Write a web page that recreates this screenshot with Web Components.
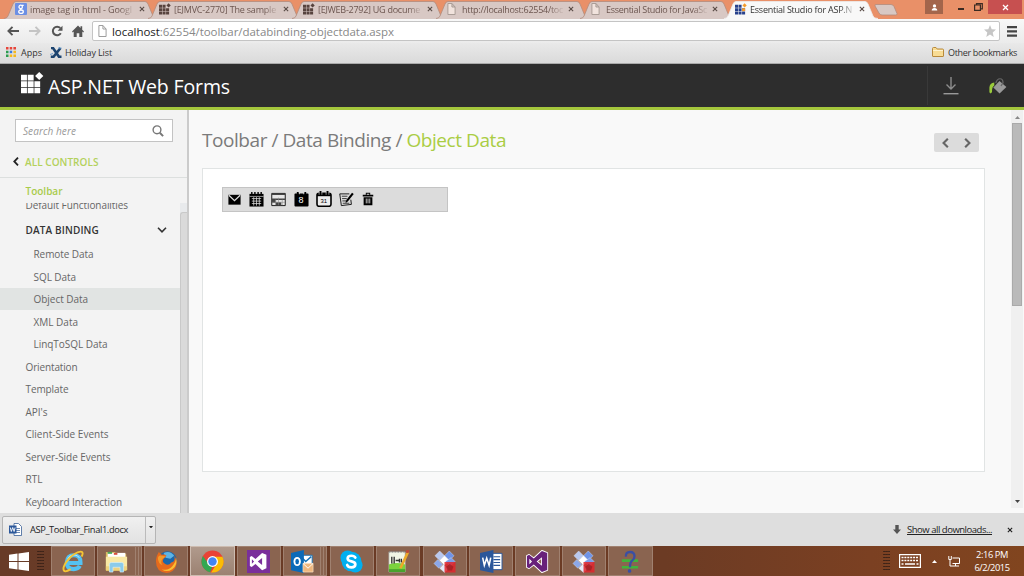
<!DOCTYPE html>
<html lang="en"><head><meta charset="utf-8"><title>Essential Studio for ASP.NET</title>
<style>body{margin:0;width:1024px;height:576px;overflow:hidden;background:#fff;font-family:"Open Sans","Noto Sans",sans-serif}</style></head>
<body><desktop-screen></desktop-screen>
<script>
const define=(n,c)=>customElements.define(n,c);
class Base extends HTMLElement{
  connectedCallback(){ if(!this.shadowRoot){this.attachShadow({mode:'open'}).innerHTML=this.view();} this.ready&&this.ready(); }
}
const calGrid='<path d="M3 7h10M3 9.7h10M3 12.3h10M5 5.5v9M8 5.5v9M11 5.5v9" stroke="#ddd" stroke-width=".8"/>';
const vs=(c)=>`<path fill="${c}" fill-rule="evenodd" d="M17 0l6 2.5v19L17 24 7.800 15.500 2.500 19.500 0 18.300V5.700L2.500 4.500l5.300 4L17 0zM17 7.200L11 12l6 4.800zM2.800 9v6l3-3z"/>`;
const cubes='<g stroke="#e8eefc" stroke-width=".4"><path fill="#b9c8ee" d="M7 1l5 5-5 5-5-5z"/><path fill="#6f93e6" d="M17 1l5 5-5 5-5-5z"/><path fill="#fff" d="M12 6l5 5-5 5-5-5z"/><path fill="#7d9ce8" d="M19 8l4 4-5 5-5-5z"/><path fill="#8ba7ea" d="M5 10l5 5-4 4-5-5z"/><path fill="#e4ebfa" d="M11 15l5 5-4 3.500-5-4.500z"/></g><path fill="#e0242c" opacity=".85" d="M12 12.500h11.500v11H12z"/><path fill="#8d1a20" opacity=".6" d="M17.500 14.500l3.800 3-1.500 4h-4.600l-1.500-4z"/>';
const grid=(c,d)=>`<path fill="${c}" d="M0 3h4.800v5H0zM5.600 3h4.800v5H5.600zM0 8.800h4.800v4.800H0zM5.600 8.800h4.800v4.800H5.600zM11.200 8.800H16v4.800h-4.800zM0 14.400h4.800v4.800H0zM5.600 14.400h4.800v4.800H5.600zM11.200 14.400H16v4.800h-4.800z"/><path fill="${d}" d="M15.200.6l3.400 3.400-3.400 3.400L11.800 4z"/>`;
const ICONS={
 google:['0 0 12 12','<rect width="12" height="12" rx="1" fill="#6c8fe4"/><g fill="none" stroke="#fff" stroke-width="1.300"><circle cx="5.700" cy="3.900" r="1.700"/><ellipse cx="6" cy="8.700" rx="2.300" ry="1.700"/><path d="M5.700 5.600q-1.300.7.800 1.400M7 2.300h1.700"/></g>'],
 logoTab:['0 0 19 20',grid('#57433e','#57433e')],
 logoColor:['0 0 19 20',grid('#27418c','#f39a2b')+'<path fill="#f39a2b" d="M11.200 8.800H16v4.800h-4.800z"/>'],
 logoWhite:['0 0 24 23','<path fill="#fff" d="M0 3h6.200v6H0zM7 3h6.200v6H7zM0 9.700h6.200v6H0zM7 9.700h6.200v6H7zM14 9.700h6v6h-6zM0 16.500h6.200v5.700H0zM7 16.500h6.200v5.700H7zM14 16.500h6v5.700h-6zM19 0l4.300 4.200L19 8.400l-4.300-4.200z"/>'],
 page:['0 0 10 12','<path fill="#f1e3dd" stroke="#a79a94" d="M1 .5h4.500L9 4v7.500H1zM5.500.5V4H9"/>'],
 pageW:['0 0 10 12','<path fill="#fff" stroke="#999" d="M1 .5h4.500L9 4v7.500H1zM5.500.5V4H9"/>'],
 close:['0 0 7 7','<path stroke="currentColor" stroke-width="1.300" d="M1 1l5 5M6 1L1 6"/>'],
 back:['0 0 12 10','<path fill="none" stroke="currentColor" stroke-width="1.900" d="M12 5H1.500M5.500.8L1.400 5l4.100 4.200"/>'],
 fwd:['0 0 12 10','<path fill="none" stroke="currentColor" stroke-width="1.900" d="M0 5h10.500M6.500.8L10.600 5 6.500 9.200"/>'],
 reload:['0 0 12 12','<path fill="none" stroke="#555" stroke-width="2" d="M9.800 8.200A4.300 4.300 0 1 1 9.300 3"/><path fill="#555" d="M11.500.8v4.900H6.600z"/>'],
 home:['0 0 12 12','<path fill="#555" d="M6 .5l2.500 2.500V1.300h1.700v3.400L12 6.600l-.8.8-.9-.8V12H7.300V8.300H4.700V12H1.700V6.600l-.9.8-.8-.8z"/>'],
 star:['0 0 12 12','<path fill="#c6c6c6" d="M6 0l1.700 4.200 4.300.3-3.300 2.900 1 4.600L6 9.500 2.300 12l1-4.600L0 4.500l4.300-.3z"/>'],
 menu:['0 0 10 11','<path fill="#444" d="M0 0h10v2.200H0zM0 4.300h10v2.200H0zM0 8.600h10v2.200H0z"/>'],
 apps:['0 0 10 10','<path fill="#e6453a" d="M0 0h2.500v2.500H0zM3.700 0h2.500v2.500H3.700zM7.400 0H10v2.500H7.400z"/><path fill="#2c9c4f" d="M0 3.700h2.500v2.500H0zM0 7.400h2.500V10H0z"/><path fill="#3a7de0" d="M3.700 3.700h2.500v2.500H3.700z"/><path fill="#f5b81d" d="M7.400 3.700H10v2.500H7.400zM3.700 7.400h2.500V10H3.700zM7.400 7.400H10V10H7.400z"/>'],
 holiday:['0 0 12 11','<path fill="none" stroke="#1c4470" stroke-width="2.600" d="M1 1h2l6 8.800h2.500M10.500 1L3.500 9.800H.8"/><path stroke="#6fa0d0" d="M8 1h3.500M0 7.500l3-1"/>'],
 folder:['0 0 12 10','<path fill="#f8dc94" stroke="#b88a3c" d="M.5 9V1.500q0-1 1-1H4l1.200 1.500h5.300q1 0 1 1V9q0 .5-.5.5H1Q.5 9.500.5 9z"/><path stroke="#fff3cf" d="M1 3.500h10"/>'],
 person:['0 0 8 8','<circle cx="4" cy="2.200" r="1.900" fill="#fff"/><path fill="#fff" d="M.8 7.500q0-3 3.200-3t3.200 3z"/>'],
 restore:['0 0 9 8','<path fill="none" stroke="#3b2a22" stroke-width="1.200" d="M.6 2h5.800v5.300H.6zM2.500 1.800V.6h5.800v5.200H6.500"/>'],
 download:['0 0 16 18','<path fill="none" stroke="#8d8d8d" stroke-width="1.400" d="M8 0v12M3.500 7.600L8 12l4.500-4.400"/><path stroke="#999" stroke-width="1.400" d="M.5 16.700h15"/>'],
 bucket:['0 0 18 18','<path fill="#999" d="M10.500 3.300l6.900 6.200-6.800 7L4.300 10z"/><path fill="none" stroke="#666" stroke-width="1.300" d="M6.800 5.500Q8 .8 11 .8T14 5l-2 3.500"/><path fill="#9acb3c" d="M5.300 4.800Q.7 5.300.4 10v5l1 1.500L3 15q-.2-5.500 2.300-7z"/>'],
 search:['0 0 12 12','<circle cx="5" cy="4.800" r="3.900" fill="none" stroke="#777" stroke-width="1.400"/><path stroke="#777" stroke-width="2" d="M7.800 7.700l3.300 3.400"/>'],
 left:['0 0 6 9','<path fill="none" stroke="currentColor" stroke-width="1.800" d="M5 .7L1.300 4.500 5 8.300"/>'],
 right:['0 0 6 9','<path fill="none" stroke="currentColor" stroke-width="1.800" d="M1 .7l3.700 3.800L1 8.300"/>'],
 down:['0 0 10 6','<path fill="none" stroke="#333" stroke-width="1.600" d="M1 .8l4 4 4-4"/>'],
 mail:['0 0 16 16','<path d="M1.500 3h13v10.500h-13z"/><path fill="none" stroke="#ddd" stroke-width="1.300" d="M2 3.500l6 5.700 6-5.700"/>'],
 cal1:['0 0 16 16','<path d="M.5 2h15v13.500H.5z"/><path stroke="#ddd" stroke-width=".7" d="M.5 4.700h15"/><path stroke="#000" stroke-width="1.500" d="M3 0v3M6.300 0v3M9.700 0v3M13 0v3"/>'+calGrid],
 sched:['0 0 16 16','<path fill="#e6e6e6" stroke="#111" stroke-width="1" d="M.8 1.500h14.400v13H.8z"/><path fill="#444" d="M1 1.500h14v1.600H1zM1 7h14v1.500H1zM1 8h4v3.500H1zM5 11h6v3.500H5z"/><path stroke="#888" stroke-width=".6" d="M1 11h14M5 8v6M8 6v8M12 8v6"/>'],
 cal8:['0 0 16 16','<path d="M.5 2.500q0-.8.8-.8H3V0h2v1.700h6V0h2v1.700h1.700q.8 0 .8.800v12q0 1-1 1h-13q-1 0-1-1z"/><path fill="#ddd" d="M5.300 0h.8v2.500h-.8zM10 0h.8v2.500H10z"/>'],
 cal31:['0 0 16 16','<rect x="1" y="2.300" width="14" height="13" rx="2" fill="#eee" stroke="#000" stroke-width="1.600"/><path d="M1 2h14v3.200H1z"/><path stroke="#000" stroke-width="2" d="M4.500 0v4M11.500 0v4"/><path stroke="#ddd" stroke-width=".6" d="M3.100.8v3M5.900.8v3M10.100.8v3M12.900.8v3"/>'],
 edit:['0 0 16 16','<path fill="none" stroke="#111" d="M11 2H.8l1.700 12.500 10.700-1.300-.6-5"/><path stroke="#333" d="M3 4.500h6M3.300 7h5M3.600 9.500h4M4 12h7"/><path stroke="#000" stroke-width="2.300" d="M14.800 1.500L8.500 9.500"/><path d="M7 11.700l.5-3.200 2 1.600z"/>'],
 trash:['0 0 16 16','<path d="M2 3h12v2H2zM5.500.8h5V3H9.500V1.900h-3V3h-1zM3 6h10v9H3z"/><path stroke="#ddd" stroke-width="1" d="M6 7.500v5.500M8 7.500v5.500M10 7.500v5.500"/>'],
 docx:['0 0 13 13','<path fill="#fff" stroke="#3a5f97" stroke-width=".8" d="M5 .5h4.500l3 3v9H5z"/><path stroke="#6f8cb5" d="M7 5.500h4M7 7.500h4M7 9.500h4"/><path fill="#2b579a" d="M0 2.500h7.500v8H0z"/><path fill="none" stroke="#fff" stroke-width=".9" d="M1.300 4.500l1 4 1.400-4 1.400 4 1-4"/>'],
 dlarrow:['0 0 8 9','<path fill="#555" d="M2.300 0h3.400v4.500H8L4 9 0 4.500h2.300z"/>'],
 win:['0 0 20 19','<path fill="#fff" d="M0 2.800L8.500 1.600v7.500H0zM9.500 1.400L20 0v9.100H9.500zM0 10h8.500v7.500L0 16.300zM9.500 10H20v9l-10.500-1.400z"/>'],
 ie:['0 0 24 24','<path fill="none" stroke="#54c2f2" stroke-width="4.300" d="M5 13.500h14.300Q19.500 5.500 12.500 5.500T5 13q0 7 7.300 7 4.500 0 6.300-3.400"/><path fill="none" stroke="#c6edff" stroke-width="1" d="M6 9q2-3.800 6.500-3.900 4 0 5.500 3"/><path fill="none" stroke="#f5c534" stroke-width="2" d="M20.500 7q2.500-5.500-1-5.300Q13 2.300 6.500 10T2 21.500q1.500 2 7-1.500"/>'],
 explorer:['0 0 26 24','<path fill="#d9b75e" d="M1 2h10l2 2h11v18H1z"/><path fill="#fff" d="M3 3h20v6H3z"/><path fill="#4aa85b" d="M3 2h5v2H3z"/><path fill="#d84c3c" d="M10 3h4v2h-4z"/><path fill="#f9e8a4" d="M1 7h24v14H1z"/><path fill="#efd27c" d="M1 17h24v4H1z"/><path fill="#8bcbe9" stroke="#d7f0fb" stroke-width=".7" d="M5 15q0-2 2-2h12q2 0 2 2v8h-4v-5H9v5H5z"/>'],
 firefox:['0 0 24 24','<circle cx="13" cy="11" r="9.700" fill="#1b67aa"/><path fill="#5db4e5" d="M9 3q7-3 11 3l-4 3-5-1z"/><path fill="#e66a1c" d="M2 6l2-4 3 3q3-1 5 1l-3 3q-2 3 1 5 4 3 7-1 5-1 3-7 4 5 2 11-3 7-10 7Q1 23 1 12q0-3 1-6z"/><path fill="#f9bf33" d="M22 8q2 8-4 12t-11 0q7 2 11-3t4-9z"/><path fill="#f39a2a" d="M3 8q1-3 4-2 2 0 4 1L8 9q-3 4 0 7-5-2-5-8z"/>'],
 chrome:['0 0 24 24','<circle cx="12" cy="12" r="11.500" fill="#e94235"/><path fill="#33a852" d="M2 6.200l6 8.500 4 2.500-2.500 6A11.500 11.500 0 0 1 2 6.200z"/><path fill="#fbbc05" d="M12 7h10.400A11.500 11.500 0 0 1 10.500 23.400L16 15z"/><circle cx="12" cy="12" r="5.700" fill="#fff"/><circle cx="12" cy="12" r="4.400" fill="#4285f4"/>'],
 vs13:['0 0 24 24','<path fill="#7a2f9b" d="M0 0h24v24H0z"/><g transform="translate(3 3) scale(.75)">'+vs('#fff')+'</g>'],
 vs:['-1 -1 26 26','<g stroke="#fff" stroke-width="2" stroke-linejoin="round">'+vs('#fff')+'</g>'+vs('#68217a')],
 outlook:['0 0 25 24','<path fill="#fff" stroke="#1673b9" d="M10 5.500h13V17H10z"/><path fill="none" stroke="#1673b9" stroke-width="1.600" d="M11 7l5 5 6-5"/><path fill="#0b6ab8" d="M0 3l14-3v24L0 21z"/><ellipse cx="6.700" cy="12" rx="3" ry="3.800" fill="none" stroke="#fff" stroke-width="2"/><path fill="#efb77e" stroke="#fae1c4" stroke-width=".7" d="M13 14h11v9H13z"/><path fill="none" stroke="#fff" d="M13 14l5.500 5 5.500-5"/>'],
 skype:['0 0 24 24','<circle cx="8" cy="8" r="7.500" fill="#00aff0"/><circle cx="16" cy="16" r="7.500" fill="#00aff0"/><circle cx="12" cy="12" r="10.300" fill="#00aff0"/><path fill="none" stroke="#fff" stroke-width="2.800" stroke-linecap="round" d="M16 8q-1-2-4-2-4 0-4 2.900 0 2.200 4 3t4 3q0 3.200-4 3.200-3.500 0-4.500-2.500"/>'],
 notepad:['0 0 24 24','<path fill="#f2f6e4" stroke="#aaa" stroke-width=".7" d="M2 2h17v21H2z"/><path fill="#7bd33d" d="M2 15q8-3 17 0v8H2z"/><path fill="#47a32d" d="M2 20h17v3H2z"/><path stroke="#333" stroke-width="1.400" d="M5 7v7M7.500 7v7M9 11h4M13 9v4M15 9v4"/><path stroke="#777" d="M2 2h17" stroke-dasharray="1.500"/><path stroke="#eca92a" stroke-width="2.700" d="M22 2l-8 17"/><path stroke="#bd4a38" stroke-width="3" d="M22 0l-1 3"/>'],
 cubes:['0 0 24 24',cubes],
 word:['0 0 24 24','<path fill="#fff" stroke="#2b579a" d="M12 3.500h11v17H12z"/><path stroke="#2b579a" stroke-width="1.200" d="M14 7h7M14 10h7M14 13h7M14 16h7"/><path fill="#2b579a" d="M0 3l14-3v24L0 21z"/><path fill="none" stroke="#fff" stroke-width="1.600" d="M2.800 8l1.700 8L7 8.500 9.500 16l1.700-8"/>'],
 query:['0 0 20 24','<path stroke="#41b33c" stroke-width="2.800" d="M1 11h18M1 18h18"/><path fill="none" stroke="#3a4fa3" stroke-width="2.600" d="M5.500 7q-.5-5 4.500-5t5 4.500q0 3-2.500 4.500T10 18"/><circle cx="9.500" cy="21.800" r="2" fill="#3a4fa3"/>'],
 keyboard:['0 0 22 14','<path fill="none" stroke="#fff" stroke-width="1.200" d="M.6.6h20.800v12.800H.6z"/><path stroke="#fff" stroke-width="1.700" stroke-dasharray="2 .9" d="M2.500 3.500h17M2.500 6.500h17"/><path stroke="#fff" stroke-width="1.700" d="M2.500 10h2M6 10h10M17.500 10h2"/>'],
 net:['0 0 12 12','<path fill="none" stroke="#fff" d="M4.500 3h7v5.500h-7M7.500 8.500V11M5 11h6M2 5v6h3M.8 1v3.500h2.500V1"/>'],
 tri:['0 0 8 5','<path fill="currentColor" d="M4 0l4 5H0z"/>'],
 trid:['0 0 8 5','<path fill="currentColor" d="M0 0h8L4 5z"/>']
};
define('ui-icon',class extends Base{view(){const [vb,b]=ICONS[this.getAttribute('name')],w=this.getAttribute('w'),h=this.getAttribute('h')||w;
 return `<style>:host{display:block;flex:none;width:${w}px;height:${h}px}svg{display:block}</style><svg width="${w}" height="${h}" viewBox="${vb}" preserveAspectRatio="none">${b}</svg>`}});
/* One-line label whose tracking is adjusted so that it spans a given width. */
define('ui-label',class extends Base{view(){return `<style>:host{display:block;flex:none;white-space:nowrap;line-height:1.300;font-size:${this.getAttribute('size')||10}px}span{display:inline-block;padding-top:1.600px}:host([underline]) span{text-decoration:underline}</style><span><slot></slot></span>`}
 ready(){const s=this.shadowRoot.querySelector('span'),w=+this.getAttribute('w');if(!w)return;const n=s.getBoundingClientRect().width;s.style.letterSpacing=((w-n)/this.textContent.length)+'px';this.style.width=w+'px'}});
define('browser-tab',class extends Base{view(){const a=this.hasAttribute('active');return `<style>:host{display:block;position:relative;width:144px;height:19px;flex:none;z-index:${a?3:1};color:${a?'#333':'#6c5650'}}
 .s{position:absolute;left:0;top:1px}.c{position:relative;display:flex;align-items:center;height:18px;padding-left:11px;gap:3px}.t{width:104px;-webkit-mask:linear-gradient(90deg,#000 86%,rgba(0,0,0,.15) 99%)}ui-icon[name=close]{margin-left:2px;color:#5b4d48}ui-icon[name=page]{margin-right:3px}ui-icon[name=page]+.t{width:101px}</style>
 <svg class="s" width="155" height="18"><path d="M0 17.500Q3 17.500 4 15L9 3Q10 .5 12 .5H141Q143 .5 144 3L149 15Q150 17.500 154 17.500V18H0z" fill="${a?'#f8f8f8':'#d8c8c4'}"/><path d="M0 17.500Q3 17.500 4 15L9 3Q10 .5 12 .5H141Q143 .5 144 3L149 15Q150 17.500 154 17.500" fill="none" stroke="${a?'#eee':'#b28b7c'}" stroke-width=".8"/></svg>
 <div class="c"><ui-icon name="${this.getAttribute('icon')}" w="${this.getAttribute('icon')=='page'?9:12}" h="12"></ui-icon><div class="t"><ui-label size="9" w="${this.getAttribute('w')}">${this.textContent}</ui-label></div><ui-icon name="close" w="6"></ui-icon></div>`}});
define('browser-chrome',class extends Base{view(){return `<style>:host{display:flex;flex-direction:column;height:64px;background:#e6e6e6;flex:none}
 .tabs{height:18.500px;background:#e99068;display:flex;padding-left:4px;flex:none}.new{margin:4px 0 0 6px;width:25px;height:12px;flex:none}.win{display:flex;margin-left:auto;height:14px;align-items:center;padding-right:2px}
 .u{width:18px;height:14px;background:#a3654b;display:grid;place-items:center;margin-right:15px}.m{width:6px;height:2px;background:#3b2a22;margin:4px 10px 0 0}.x{width:34px;height:14px;background:#c75050;display:grid;place-items:center;color:#fff;margin-left:5px}
 .nav{height:24.500px;background:linear-gradient(#f8f8f8,#ebebeb);display:flex;align-items:center;padding:1px 7px 0 7px;box-sizing:border-box;color:#555;flex:none}
 .url{flex:1;display:flex;align-items:center;height:18px;background:#fff;border:1px solid #c4c4c4;border-radius:2px;margin:0 7px 0 8px;padding:0 3px 0 5px;gap:5px;color:#888}.url b{font-weight:400;color:#222}.url ui-icon[name=star]{margin-left:auto}
 .bm{flex:1;background:linear-gradient(#e9e9e9,#dadada);display:flex;align-items:center;padding:0 7px 2px 6px;color:#333;border-bottom:1px solid #aaa}.o{display:flex;gap:4px;margin-left:auto;align-items:center}</style>
 <div class="tabs"><browser-tab icon="google" w="102">image tag in html - Googl</browser-tab><browser-tab icon="logoTab" w="102">[EJMVC-2770] The sample</browser-tab><browser-tab icon="logoTab" w="102">[EJWEB-2792] UG docume</browser-tab><browser-tab icon="page" w="101">http://localhost:62554/toc</browser-tab><browser-tab icon="page" w="101">Essential Studio for JavaSc</browser-tab><browser-tab active icon="logoColor" w="102">Essential Studio for ASP.N</browser-tab>
 <svg class="new" viewBox="0 0 25 12"><path d="M2 .5h15q2 0 3 2l3 7q.5 1.500-1.500 1.500H8q-2 0-3-2L1 2Q.5.5 2 .5z" fill="#d8c8c4" stroke="#b28b7c" stroke-width=".8"/></svg>
 <div class="win"><div class="u"><ui-icon name="person" w="7"></ui-icon></div><div class="m"></div><ui-icon name="restore" w="9" h="8"></ui-icon><div class="x"><ui-icon name="close" w="7"></ui-icon></div></div></div>
 <div class="nav"><ui-icon name="back" w="12" h="10"></ui-icon><ui-icon name="fwd" w="12" h="10" style="margin-left:10px;color:#c4c4c4"></ui-icon><ui-icon name="reload" w="12" style="margin-left:10px"></ui-icon><ui-icon name="home" w="12" style="margin-left:9px"></ui-icon>
 <div class="url"><ui-icon name="pageW" w="9" h="12"></ui-icon><ui-label size="11.500" w="282" style="margin-top:1px"><b>localhost</b>:62554/toolbar/databinding-objectdata.aspx</ui-label><ui-icon name="star" w="12"></ui-icon></div><ui-icon name="menu" w="10" h="11"></ui-icon></div>
 <div class="bm"><ui-icon name="apps" w="10"></ui-icon><ui-label size="9" w="21" style="margin-left:5px">Apps</ui-label><ui-icon name="holiday" w="12" h="11" style="margin-left:8px"></ui-icon><ui-label size="9" w="47" style="margin-left:3px">Holiday List</ui-label><div class="o"><ui-icon name="folder" w="12" h="10"></ui-icon><ui-label size="9" w="69">Other bookmarks</ui-label></div></div>`}});
define('site-header',class extends Base{view(){return `<style>:host{display:flex;flex:none;height:43px;background:#2d2d2d;border-bottom:3px solid #a4c63c;color:#fff;align-items:center;padding-left:21px}
 .i{margin-left:auto;display:flex;height:38px;border-left:1px solid #393939;align-items:center;padding:1px 17px 0 15px;gap:30px}</style><ui-icon name="logoWhite" w="23" h="22" style="margin-top:-5px"></ui-icon><ui-label size="19.500" w="182" style="margin:1px 0 0 4px">ASP.NET Web Forms</ui-label><div class="i"><ui-icon name="download" w="16" h="18"></ui-icon><ui-icon name="bucket" w="18" h="17"></ui-icon></div>`}});
define('nav-row',class extends Base{view(){return `<style>:host{display:flex;align-items:center;height:22.500px;padding-left:${this.hasAttribute('sub')?33.5:25.5}px;color:#666;box-sizing:border-box}:host([on]){background:#e1e4e3}:host([head]){height:26.700px;font-weight:600;color:#333;padding-right:13px;justify-content:space-between}</style><ui-label size="10" w="${this.getAttribute('w')}">${this.textContent}</ui-label>${this.hasAttribute('head')?'<ui-icon name="down" w="10" h="6"></ui-icon>':''}`}});
define('side-nav',class extends Base{view(){return `<style>:host{display:flex;flex-direction:column;width:186.500px;background:#f3f3f3;border-right:2px solid #cbcbcb;box-sizing:content-box;overflow:hidden;flex:none}
 .s{margin:9px 14px 0 15px;height:21px;border:1px solid #c3c3c3;background:#fff;display:flex;align-items:center;justify-content:space-between;padding:0 8px 0 7px;color:#999;font-style:italic;flex:none}
 .a{height:36px;border-bottom:1px solid #dcdfde;display:flex;align-items:center;padding:4px 0 0 13px;gap:6px;color:#b3d15c;font-weight:600;flex:none;box-sizing:border-box}.t{height:25px;box-sizing:border-box;padding:5px 0 0 25.500px;color:#a9cb4c;font-weight:600;flex:none}
 .v{flex:1;display:flex;overflow:hidden}.l{width:180px;margin-top:-9.300px}.b{flex:1;background:#e8eaec;display:flex;padding-top:9px}.b i{flex:1;background:#dadada;border:1px solid #c9c9c9;border-right:0;border-bottom:0;border-radius:3px 0 0 0}</style>
 <div class="s"><ui-label size="10" w="53">Search here</ui-label><ui-icon name="search" w="12"></ui-icon></div><div class="a"><ui-icon name="left" w="6" h="9" style="color:#222"></ui-icon><ui-label size="10" w="73.500">ALL CONTROLS</ui-label></div><div class="t"><ui-label size="10" w="37">Toolbar</ui-label></div>
 <div class="v"><div class="l"><nav-row w="102.500">Default Functionalities</nav-row><nav-row head w="73.500">DATA BINDING</nav-row><nav-row sub w="60">Remote Data</nav-row><nav-row sub w="42.500">SQL Data</nav-row><nav-row sub on w="54.500">Object Data</nav-row><nav-row sub w="44.500">XML Data</nav-row><nav-row sub w="74">LinqToSQL Data</nav-row><nav-row w="52">Orientation</nav-row><nav-row w="43">Template</nav-row><nav-row w="22">API's</nav-row><nav-row w="83">Client-Side Events</nav-row><nav-row w="85">Server-Side Events</nav-row><nav-row w="17">RTL</nav-row><nav-row w="96.500">Keyboard Interaction</nav-row></div><div class="b"><i></i></div></div>`}});
define('tool-strip',class extends Base{view(){return `<style>:host{display:flex;align-items:center;box-sizing:border-box;width:226px;height:24.500px;background:#dcdcdc;border:1px solid #c4c4c4;padding-left:3.700px;gap:7.300px}div{display:grid}div>*{grid-area:1/1;place-self:center}ui-label{font-family:"Liberation Sans",sans-serif}</style>
 <ui-icon name="mail" w="15"></ui-icon><ui-icon name="cal1" w="15"></ui-icon><ui-icon name="sched" w="15"></ui-icon><div><ui-icon name="cal8" w="15"></ui-icon><ui-label size="9" style="color:#fff;padding-top:1px">8</ui-label></div><div><ui-icon name="cal31" w="16"></ui-icon><ui-label size="6" style="padding-top:3px">31</ui-label></div><ui-icon name="edit" w="15"></ui-icon><ui-icon name="trash" w="14"></ui-icon>`}});
define('content-area',class extends Base{view(){return `<style>:host{flex:1;display:flex;background:#f9f9f9}.m{flex:1;padding:0 26.500px 0 13.500px}.h{height:58px;display:flex;justify-content:space-between;box-sizing:border-box;color:#7b7b7b}.h em{font-style:normal;color:#aacd44}
 .n{display:flex;justify-content:space-between;align-items:center;box-sizing:border-box;width:45px;height:19px;margin:23px 5.500px 0 0;background:#dcdcdc;border-radius:2px;padding:0 8px;color:#666}.p{height:304px;box-sizing:border-box;background:#fff;border:1px solid #e1e4e4;padding:18px 19px}
 .s{width:12px;height:398px;background:#f0f0f0;display:flex;flex-direction:column;align-items:center;color:#888;margin-right:1px}.s i{width:10px;height:183px;background:#bababa;border:1px solid #aaa;box-sizing:border-box;margin:4px 0 auto}</style>
 <div class="m"><div class="h"><ui-label size="19" w="304" style="margin-top:16px">Toolbar / Data Binding / <em>Object Data</em></ui-label><div class="n"><ui-icon name="left" w="7" h="10"></ui-icon><ui-icon name="right" w="7" h="10"></ui-icon></div></div><div class="p"><tool-strip></tool-strip></div></div>
 <div class="s"><ui-icon name="tri" w="5" h="3" style="margin-top:6px"></ui-icon><i></i><ui-icon name="trid" w="5" h="3" style="color:#444;margin-bottom:5px"></ui-icon></div>`}});
define('download-bar',class extends Base{view(){return `<style>:host{display:flex;flex:none;height:33px;background:#dedede;align-items:center;padding:0 11px 0 2px;color:#222}.f{display:flex;align-items:center;width:154px;height:28px;border:1px solid #b5b5b5;border-radius:2px;background:linear-gradient(#f0f0f0,#e2e2e2);box-sizing:border-box;padding-left:6px}.d{width:10px;height:100%;border-left:1px solid #bbb;margin-left:auto;display:flex;justify-content:center;padding-top:9px;box-sizing:border-box}.r{margin-left:auto;display:flex;align-items:center}</style>
 <div class="f"><ui-icon name="docx" w="13"></ui-icon><ui-label size="9.300" w="98" style="margin-left:8px">ASP_Toolbar_Final1.docx</ui-label><div class="d"><ui-icon name="trid" w="4" h="2.500"></ui-icon></div></div><div class="r"><ui-icon name="dlarrow" w="8" h="9"></ui-icon><ui-label underline size="9.500" w="85" style="margin:0 15px 0 6px">Show all downloads...</ui-label><ui-icon name="close" w="6"></ui-icon></div>`}});
define('task-button',class extends Base{view(){const k=this.hasAttribute('stack');return `<style>:host{display:flex;flex:none;width:44.300px;height:30px}div{box-sizing:border-box;height:30px;border:1px solid #a08170;background:#8a6450;display:grid;place-items:center}.m{flex:1}.k{width:3px;border-left:0}:host([on]) .m{background:linear-gradient(#b09a8c,#9c8272);border-color:#cdbcb0}</style><div class="m"><ui-icon name="${this.getAttribute('icon')}" w="${this.getAttribute('w')||23}" h="${this.getAttribute('h')||23}"></ui-icon></div>${k?'<div class="k"></div><div class="k"></div>':''}`}});
define('task-bar',class extends Base{view(){const b=['ie','explorer*','firefox','chrome!','vs13','outlook*','skype','notepad','cubes','word','vs','cubes','query'];
 return `<style>:host{display:flex;flex:none;height:30px;background:linear-gradient(90deg,#683b27,#6c3b24 65%,#7b4022 85%,#81451f);align-items:center;padding-left:9px;box-sizing:border-box}
 .g{width:7px;height:22px;background:radial-gradient(circle,#3b2117 .8px,transparent 1px) 0 0/2.500px 3px;margin:0 7px 0 8px}.b{display:flex;gap:2.150px}.t{display:flex;align-items:center;color:#fff;margin-left:auto;padding-right:13px}.c{width:38px;display:flex;flex-direction:column;align-items:center;margin-left:13px}.c ui-label{line-height:1.220}</style>
 <ui-icon name="win" w="20" h="19"></ui-icon><div class="g"></div><div class="b">${b.map(x=>`<task-button icon="${x.replace(/\W/,'')}" ${x.includes('*')?'stack':''} ${x.includes('!')?'on':''} ${x=='query'?'w="18"':''}></task-button>`).join('')}</div>
 <div class="t"><div class="g" style="margin:0 9px 0 0"></div><ui-icon name="keyboard" w="22" h="14"></ui-icon><ui-icon name="tri" w="5" h="3" style="margin-left:11px"></ui-icon><ui-icon name="net" w="12" style="margin-left:11px"></ui-icon><div class="c"><ui-label size="9.300" w="32" style="line-height:1.150">2:16 PM</ui-label><ui-label size="9.300" w="35" style="line-height:1.150">6/2/2015</ui-label></div></div>`}});
define('desktop-screen',class extends Base{view(){return `<style>:host{display:flex;flex-direction:column;width:1024px;height:576px;overflow:hidden}main{flex:1;display:flex;min-height:0}</style><browser-chrome></browser-chrome><site-header></site-header><main><side-nav></side-nav><content-area></content-area></main><download-bar></download-bar><task-bar></task-bar>`}});
</script></body></html>
